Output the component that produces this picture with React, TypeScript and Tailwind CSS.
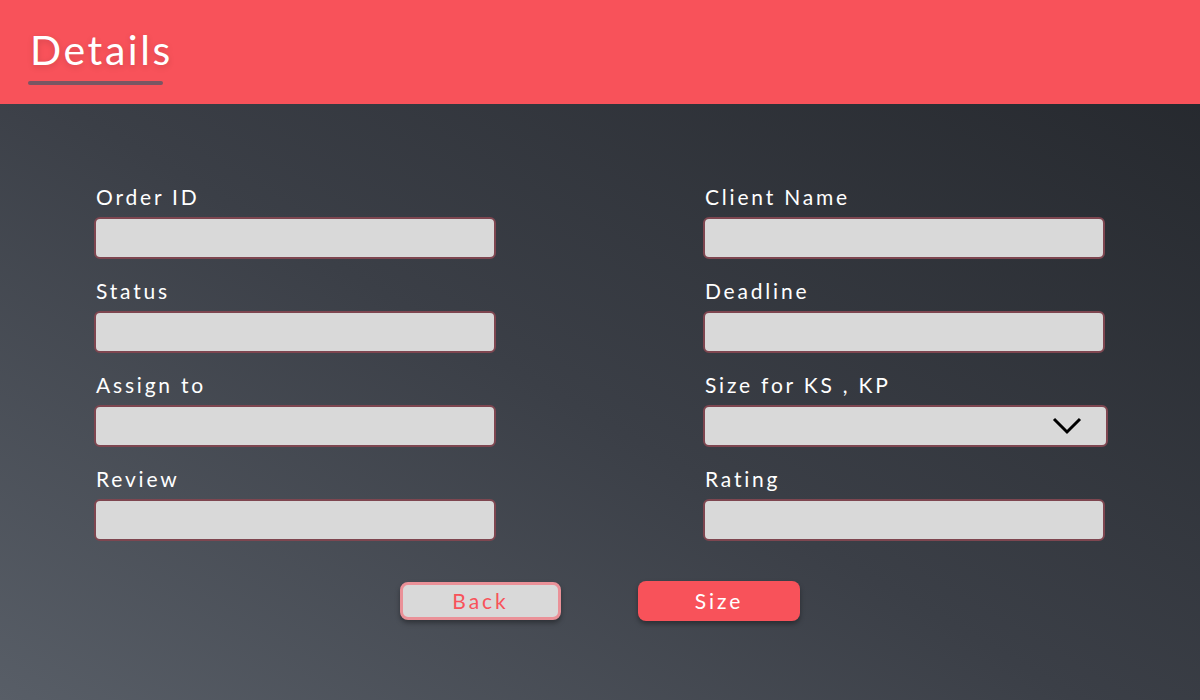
import React from "react";

const leftFields = ["Order ID", "Status", "Assign to", "Review"];
const rightFields = ["Client Name", "Deadline", "Size for KS , KP", "Rating"];

function Field({ label, select }: { label: string; select?: boolean }) {
  return (
    <div className="flex flex-col">
      <label className="text-white text-[21px] leading-[28px] tracking-[2.8px] pl-[2px]">{label}</label>
      {select ? (
        <div className="mt-[6px] h-[42px] w-[405px] rounded-[6px] border-2 border-[#7e4650] bg-[#d9d9d9] flex items-center justify-end pr-[24px]">
          <svg width="30" height="18" viewBox="0 0 30 18" fill="none">
            <path d="M2 2 L15 15 L28 2" stroke="#000" strokeWidth="3" />
          </svg>
        </div>
      ) : (
        <input
          type="text"
          className="mt-[6px] h-[42px] w-full rounded-[6px] border-2 border-[#7e4650] bg-[#d9d9d9] outline-none"
        />
      )}
    </div>
  );
}

export default function App() {
  return (
    <div
      className="w-[1200px] h-[700px] flex flex-col bg-[linear-gradient(to_top_right,#585e67_0%,#3b3f47_45%,#23262b_100%)]"
      style={{ fontFamily: "Lato, 'Noto Sans', sans-serif" }}
    >
      {/* Header */}
      <div className="h-[104px] bg-[#f8525a] pl-[28px] pt-[24px]">
        <h1 className="text-white text-[41px] leading-[52px] tracking-[2.6px] pl-[2px] [text-shadow:0_2px_6px_rgba(0,0,0,0.15)]">
          Details
        </h1>
        <div className="mt-[5px] h-[4px] w-[135px] rounded-full bg-[#7a5663]" />
      </div>

      {/* Form */}
      <div className="pt-[79px] px-[94px] grid grid-cols-[402px_402px] gap-x-[207px]">
        <div className="flex flex-col gap-[18px]">
          {leftFields.map((f) => (
            <Field key={f} label={f} />
          ))}
        </div>
        <div className="flex flex-col gap-[18px]">
          {rightFields.map((f) => (
            <Field key={f} label={f} select={f === "Size for KS , KP"} />
          ))}
        </div>
      </div>

      {/* Buttons */}
      <div className="mt-[40px] flex justify-center items-center gap-[77px]">
        <button
          type="button"
          className="w-[161px] h-[38px] rounded-[8px] border-[3px] border-[#ea9198] bg-[#d9d9d9] text-[#f8525a] text-[21px] tracking-[3px] shadow-[0_3px_5px_rgba(0,0,0,0.35)]"
        >
          Back
        </button>
        <button
          type="button"
          className="w-[162px] h-[40px] rounded-[8px] bg-[#f8525a] text-white text-[21px] tracking-[3px] shadow-[0_3px_5px_rgba(0,0,0,0.35)]"
        >
          Size
        </button>
      </div>
    </div>
  );
}
